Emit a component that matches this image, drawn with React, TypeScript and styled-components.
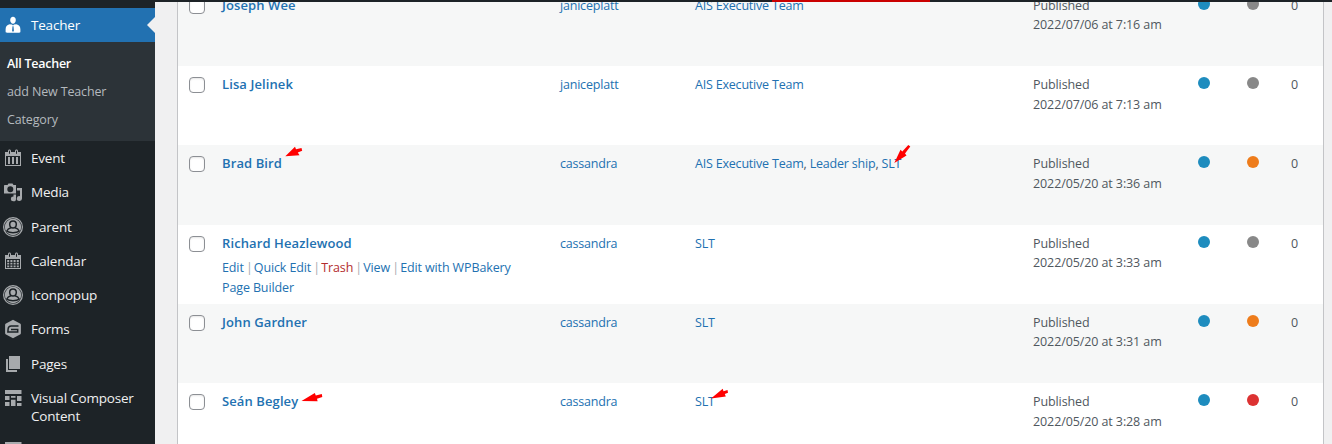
import React from 'react';
import styled, { createGlobalStyle } from 'styled-components';

const GlobalStyle = createGlobalStyle`
  * { box-sizing: border-box; }
  body {
    margin: 0;
    background: #f0f0f1;
    font-family: 'Open Sans', 'Noto Sans', sans-serif;
    font-size: 12.5px;
    color: #50575e;
  }
`;

const Page = styled.div`
  position: relative;
  width: 1332px;
  height: 444px;
  overflow: hidden;
  display: flex;
  flex-direction: column;
`;

const TopBar = styled.div`
  height: 2px;
  flex: none;
  background: #1d2327;
  padding-left: 772px;
  z-index: 1;
`;

const TopBarAlert = styled.div`
  width: 158px;
  height: 2px;
  background: #ca0000;
`;

const Body = styled.div`
  flex: 1;
  min-height: 0;
  display: flex;
`;

const Sidebar = styled.nav`
  width: 155px;
  flex: none;
  background: #1d2327;
  padding-top: 6px;
  overflow: hidden;
`;

const MenuItem = styled.a<{ $active?: boolean }>`
  display: flex;
  gap: 8px;
  align-items: flex-start;
  min-height: 34.25px;
  padding: 8px 0 8px 3px;
  font-size: 13.5px;
  line-height: 18.2px;
  letter-spacing: -0.2px;
  color: ${(p) => (p.$active ? '#fff' : '#f0f0f1')};
  background: ${(p) => (p.$active ? '#2271b1' : 'transparent')};
  svg {
    flex: none;
    margin: -1px 0;
    fill: ${(p) => (p.$active ? '#fff' : '#a7aaad')};
  }
`;

const ActiveArrow = styled.span`
  margin: 1px 0 0 auto;
  border: 8px solid transparent;
  border-right-color: #f0f0f1;
  border-left-width: 0;
`;

const Submenu = styled.div`
  height: 98.75px;
  padding: 8px 0 0 7px;
  background: #2c3338;
`;

const SubmenuLink = styled.a<{ $current?: boolean }>`
  display: block;
  height: 28px;
  line-height: 28px;
  font-size: 12.5px;
  letter-spacing: ${(p) => (p.$current ? '-0.25px' : '-0.15px')};
  font-weight: ${(p) => (p.$current ? 600 : 400)};
  color: ${(p) => (p.$current ? '#fff' : '#b4b9be')};
`;

const Content = styled.main`
  flex: 1;
  padding: 0 8px 0 22px;
  overflow: hidden;
`;

const Table = styled.div`
  margin-top: -15.33px;
  border: solid #c3c4c7;
  border-width: 0 1px;
`;

const Row = styled.div<{ $shaded: boolean }>`
  display: grid;
  grid-template-columns: 34px 338px 135px 338px 165px 49px 44px 32px;
  height: 79.33px;
  padding: 9px 0 0 10px;
  line-height: 19.5px;
  background: ${(p) => (p.$shaded ? '#f6f7f7' : '#fff')};
`;

const CheckBox = styled.span`
  width: 16px;
  height: 16px;
  margin: 2px 0 0 1px;
  border: 1px solid #8c8f94;
  border-radius: 4px;
  background: #fff;
  box-shadow: inset 0 1px 2px rgba(0, 0, 0, 0.1);
`;

const Name = styled.a`
  display: block;
  font-size: 13px;
  font-weight: 600;
  letter-spacing: 0.1px;
  color: #2271b1;
`;

const Actions = styled.div`
  width: 310px;
  margin-top: 5px;
  letter-spacing: -0.12px;
`;

const Separator = styled.span`
  letter-spacing: -1.1px;
  color: #a7aaad;
`;

const Link = styled.a<{ $danger?: boolean }>`
  color: ${(p) => (p.$danger ? '#b32d2e' : '#2271b1')};
`;

const Cell = styled.div`
  letter-spacing: -0.2px;
`;

const DateCell = styled.div`
  letter-spacing: -0.1px;
`;

const Dot = styled.span<{ $color: string }>`
  width: 12px;
  height: 12px;
  margin-top: 2px;
  border-radius: 50%;
  background: ${(p) => p.$color};
`;

const Annotations = styled.svg`
  position: absolute;
  inset: 0;
  z-index: 2;
  pointer-events: none;
`;

const Icon = ({ children }: { children: React.ReactNode }) => (
  <svg width="20" height="20" viewBox="0 0 20 20" fillRule="evenodd">{children}</svg>
);

const calendarFrame =
  'M15 4h3v14H2V4h3V3c0-.83.67-1.5 1.5-1.5S8 2.17 8 3v1h4V3c0-.83.67-1.5 1.5-1.5S15 2.17 15 3v1zM6 3v2.5c0 .28.22.5.5.5s.5-.22.5-.5V3c0-.28-.22-.5-.5-.5S6 2.72 6 3zm7 0v2.5c0 .28.22.5.5.5s.5-.22.5-.5V3c0-.28-.22-.5-.5-.5s-.5.22-.5.5zM17 17V8H3v9z';

const TeacherIcon = () => (
  <Icon>
    <path d="M10 1.800c1.700 0 2.800 1.300 2.800 3.200 0 2-1.200 3.700-2.800 3.700S7.200 7 7.200 5c0-1.900 1.100-3.200 2.800-3.200z" />
    <path d="M6.600 9.200 9 9.500l1 1 1-1 2.400-.3c2.800.6 4 2.400 4 5.200v2.200c0 .8-.5 1.200-1.200 1.200H3.800c-.7 0-1.200-.4-1.200-1.200v-2.200c0-2.800 1.200-4.600 4-5.200zM9.500 11.300 9.100 15.700 10 17l.9-1.300-.4-4.400z" />
  </Icon>
);
const EventIcon = () => (
  <Icon>
    <path d={calendarFrame} />
    <path d="M5 9h2v7H5zM9 9h2v7H9zM13 9h2v7h-2z" />
  </Icon>
);
const CalendarIcon = () => (
  <Icon>
    <path d={calendarFrame} />
    <path d="M4.200 9h2v2h-2zM7.400 9h2v2h-2zM10.600 9h2v2h-2zM13.800 9h2v2h-2zM4.200 11.800h2v1.800h-2zM7.400 11.800h2v1.800h-2zM10.600 11.800h2v1.800h-2zM13.800 11.800h2v1.800h-2zM4.200 14.400h2v1.800h-2zM7.400 14.400h2v1.800h-2zM10.600 14.400h2v1.800h-2zM13.800 14.400h2v1.800h-2z" />
  </Icon>
);
const MediaIcon = () => (
  <Icon>
    <path d="M2 3h2.500L5.500 1.500h4L10.500 3H13v8.500H1V4c0-.6.4-1 1-1zM7.300 4.300a3 3 0 1 0 0 6 3 3 0 0 0 0-6z" />
    <path d="M14 6h5v10.500a2.600 2.400 0 1 1-2-2.300V8.500h-3zM10.500 12.500H13v4.200a2.600 2.400 0 1 1-2.500-2.200z" />
  </Icon>
);
const PersonIcon = () => (
  <Icon>
    <path d="M10 0a10 10 0 1 1 0 20 10 10 0 0 1 0-20zM10 1.200a8.800 8.800 0 1 0 0 17.600 8.800 8.800 0 0 0 0-17.600z" />
    <circle cx="10" cy="10" r="8.200" />
    <path
      fill="none"
      stroke="#1d2327"
      strokeWidth="1.500"
      strokeLinejoin="round"
      d="M10 4c2 0 3.300 1.300 3.300 3.300S12 11 10 11s-3.300-1.700-3.300-3.700S8 4 10 4zM8 10.800c-2 .5-3.600 1.700-4.300 3.500M12 10.800c2 .5 3.600 1.700 4.300 3.500M3.500 14.200c1.600.9 3.700 1.500 6.500 1.500s4.900-.6 6.500-1.500"
    />
  </Icon>
);
const FormsIcon = () => (
  <Icon>
    <path d="M10 .8 17 4.600c.7.400.9.800.9 1.500v7.800c0 .7-.2 1.100-.9 1.500l-7 3.800-7-3.800c-.7-.4-.9-.8-.9-1.500V6.100c0-.7.2-1.100.9-1.500z" />
    <path fill="none" stroke="#1d2327" strokeWidth="1.500" d="M15.500 6.900H8.200C6 6.900 5.300 8 5.100 10l-.2 3.100h9.800v-2.700H8" />
  </Icon>
);
const PagesIcon = () => (
  <Icon>
    <path d="M6 2h11v13H6zM3 5h2v11h9v2H3z" />
  </Icon>
);
const GridIcon = () => (
  <Icon>
    <path d="M2 2h16.500v4H2zM2 8h4.500v4H2zM8 8h4.500v1.800H8zM14 8h4.500v5H14zM2 14h4.500v4H2zM8 11.800h4.500V18H8zM14 15h4.500v3H14z" />
  </Icon>
);

const menu = [
  { label: 'Event', icon: <EventIcon /> },
  { label: 'Media', icon: <MediaIcon /> },
  { label: 'Parent', icon: <PersonIcon /> },
  { label: 'Calendar', icon: <CalendarIcon /> },
  { label: 'Iconpopup', icon: <PersonIcon /> },
  { label: 'Forms', icon: <FormsIcon /> },
  { label: 'Pages', icon: <PagesIcon /> },
  { label: 'Visual Composer Content', icon: <GridIcon /> },
  { label: '', icon: <GridIcon /> },
];

const BLUE = '#1e8cbe';
const GRAY = '#888';
const ORANGE = '#ee7c1b';
const RED = '#dc3232';

const rows = [
  { name: 'Joseph Wee', author: 'janiceplatt', tags: ['AIS Executive Team'], date: '2022/07/06 at 7:16 am', score: GRAY },
  { name: 'Lisa Jelinek', author: 'janiceplatt', tags: ['AIS Executive Team'], date: '2022/07/06 at 7:13 am', score: GRAY },
  { name: 'Brad Bird', author: 'cassandra', tags: ['AIS Executive Team', 'Leader ship', 'SLT'], date: '2022/05/20 at 3:36 am', score: ORANGE },
  { name: 'Richard Heazlewood', author: 'cassandra', tags: ['SLT'], date: '2022/05/20 at 3:33 am', score: GRAY, open: true },
  { name: 'John Gardner', author: 'cassandra', tags: ['SLT'], date: '2022/05/20 at 3:31 am', score: ORANGE },
  { name: 'Seán Begley', author: 'cassandra', tags: ['SLT'], date: '2022/05/20 at 3:28 am', score: RED },
];

const Sep = () => <Separator> | </Separator>;

export default function App() {
  return (
    <Page>
      <GlobalStyle />
      <TopBar><TopBarAlert /></TopBar>
      <Body>
        <Sidebar>
          <MenuItem $active><TeacherIcon />Teacher<ActiveArrow /></MenuItem>
          <Submenu>
            <SubmenuLink $current>All Teacher</SubmenuLink>
            <SubmenuLink>add New Teacher</SubmenuLink>
            <SubmenuLink>Category</SubmenuLink>
          </Submenu>
          {menu.map((m, i) => (
            <MenuItem key={i}>{m.icon}<span>{m.label}</span></MenuItem>
          ))}
        </Sidebar>
        <Content>
          <Table>
            {rows.map((r, i) => (
              <Row key={r.name} $shaded={i % 2 === 0}>
                <CheckBox />
                <div>
                  <Name>{r.name}</Name>
                  {r.open && (
                    <Actions>
                      <Link>Edit</Link><Sep />
                      <Link>Quick Edit</Link><Sep />
                      <Link $danger>Trash</Link><Sep />
                      <Link>View</Link><Sep />
                      <Link>Edit with WPBakery Page Builder</Link>
                    </Actions>
                  )}
                </div>
                <Cell><Link>{r.author}</Link></Cell>
                <Cell>
                  {r.tags.map((t, k) => (
                    <React.Fragment key={t}>{k > 0 && ', '}<Link>{t}</Link></React.Fragment>
                  ))}
                </Cell>
                <DateCell>Published<br />{r.date}</DateCell>
                <Dot $color={BLUE} />
                <Dot $color={r.score} />
                <Cell>0</Cell>
              </Row>
            ))}
          </Table>
        </Content>
      </Body>
      <Annotations width="1332" height="444" fill="#f00">
        <path d="M285.300 156.200 295 146.800 296 149.300 301.500 148 302.200 150.800 297.800 152.500 299.500 155.200z" />
        <path d="M301.500 401 314.800 393 315.800 395.600 321.800 394 322.300 397 317 398.700 317.600 401.300z" />
        <path d="M894.300 163 900.500 149.700 902.300 151.500 908.300 145 910.300 146.600 905 153.500 906.500 155.500z" />
        <path d="M711 398.500 722.700 388.800 723.500 391.300 727.500 390 728 392.800 724.800 394 725.800 396.600z" />
      </Annotations>
    </Page>
  );
}
